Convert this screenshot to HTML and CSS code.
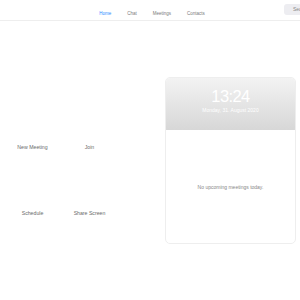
FILE: index.html
```html
<!DOCTYPE html>
<html lang="en">
<head>
  <meta charset="UTF-8">
  <meta name="viewport" content="width=device-width, initial-scale=1.0">
  <title>Home</title>
  <link rel="stylesheet" href="styles.css">
</head>
<body>

<div class="topbar">
  <nav class="tabs">
    <a class="tab active">Home</a>
    <a class="tab">Chat</a>
    <a class="tab">Meetings</a>
    <a class="tab">Contacts</a>
  </nav>
  <div class="search">Search</div>
</div>

<div class="main">
  <div class="actions">
    <div class="action">
      <div class="action-icon"></div>
      <span class="action-label">New Meeting</span>
    </div>
    <div class="action">
      <div class="action-icon"></div>
      <span class="action-label">Join</span>
    </div>
    <div class="action">
      <div class="action-icon"></div>
      <span class="action-label">Schedule</span>
    </div>
    <div class="action">
      <div class="action-icon"></div>
      <span class="action-label">Share Screen</span>
    </div>
  </div>

  <div class="today">
    <div class="today-head">
      <div class="clock">13:24</div>
      <div class="date">Monday, 31. August 2020</div>
    </div>
    <div class="today-body">No upcoming meetings today.</div>
  </div>
</div>

</body>
</html>
```

FILE: styles.css
```css
html {
  overflow: hidden;
}
body {
  margin: 0;
  background-color: #fff;
  font-family: "Liberation Sans", Arial, sans-serif;
  color: #555;
}
.topbar {
  display: grid;
  grid-template-columns: 1fr auto 1fr;
  height: 20px;
  border-bottom: 1px solid #eeeeee;
}
.tabs {
  grid-column: 2;
  display: flex;
  align-items: flex-end;
  gap: 16px;
  padding-bottom: 3px;
  margin-left: 4px;
}
.tab {
  font-size: 4.5px;
  line-height: 6px;
  color: #7a7a7a;
}
.tab.active {
  color: #2d8cff;
}
.search {
  grid-column: 3;
  justify-self: end;
  align-self: start;
  margin-top: 4px;
  margin-right: -44px;
  width: 60px;
  height: 11px;
  box-sizing: border-box;
  padding-left: 9px;
  border-radius: 3px;
  background-color: #ededf1;
  font-size: 5px;
  line-height: 11px;
  color: #888;
}
.main {
  display: flex;
  padding-top: 56px;
}
.actions {
  flex: 1;
  display: grid;
  grid-template-columns: 57px 57px;
  grid-auto-rows: 58px;
  row-gap: 8px;
  align-content: start;
  padding: 16px 0 0 4px;
}
.action {
  display: flex;
  flex-direction: column;
  align-items: center;
}
.action-icon {
  width: 40px;
  height: 50px;
}
.action-label {
  font-size: 5.2px;
  line-height: 8px;
  color: #6a6a6a;
}
.today {
  width: 131px;
  height: 167px;
  margin-right: 4px;
  box-sizing: border-box;
  border: 1px solid #eeeeee;
  border-radius: 5px;
  overflow: hidden;
  display: flex;
  flex-direction: column;
}
.today-head {
  height: 52px;
  display: flex;
  flex-direction: column;
  align-items: center;
  padding-top: 9px;
  box-sizing: border-box;
  background: linear-gradient(#f3f3f3, #d7d7d7);
  color: #fff;
}
.clock {
  font-size: 16.5px;
  line-height: 18px;
  letter-spacing: -0.6px;
}
.date {
  font-size: 5px;
  line-height: 8px;
  margin-top: 1px;
}
.today-body {
  flex: 1;
  display: flex;
  align-items: center;
  justify-content: center;
  font-size: 5px;
  color: #888;
}
```
